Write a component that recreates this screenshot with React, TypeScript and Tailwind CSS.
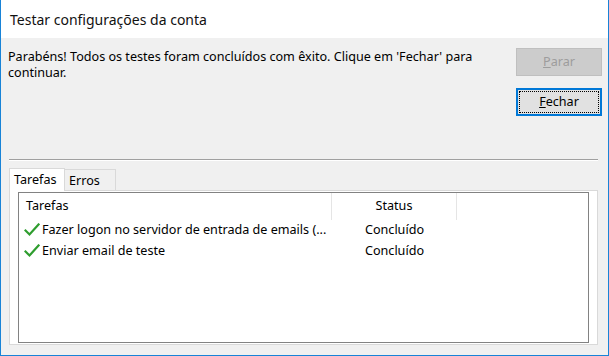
import React from "react";

function Check() {
  return (
    <svg width="16" height="14" viewBox="0 0 16 14" className="shrink-0">
      <path d="M1.5 7.5 L5.5 11.5 L14.5 1.5" fill="none" stroke="#2e9d2e" strokeWidth="2.2" strokeLinecap="square" />
    </svg>
  );
}

export default function App() {
  const font = { fontFamily: '"Noto Sans", "Open Sans", sans-serif' };
  return (
    <div
      className="w-[609px] h-[356px] flex flex-col border-l border-r border-b border-[#1883d7] bg-[#f0f0f0] text-[12.6px] text-black overflow-hidden"
      style={font}
    >
      <div className="h-[38px] shrink-0 bg-white flex items-center pl-[9px] text-[14px] text-[#111]">
        Testar configurações da conta
      </div>
      <div className="flex-1 flex flex-col">
        <div className="flex h-[121px] shrink-0">
          <div className="flex-1 pl-[7px] pt-[11px] pr-[30px] leading-[16px]">
            Parabéns! Todos os testes foram concluídos com êxito. Clique em 'Fechar' para continuar.
          </div>
          <div className="w-[86px] mr-[6px] pt-[10px] flex flex-col gap-[12px]">
            <div className="h-[28px] bg-[#cccccc] border border-[#bfbfbf] flex items-center justify-center text-[#9d9d9d]">
              <span><span className="underline">P</span>arar</span>
            </div>
            <div className="relative h-[28px] bg-[#e1e1e1] border-2 border-[#0078d7] flex items-center justify-center">
              <span className="absolute inset-[1px] border border-dotted border-black" />
              <span><span className="underline">F</span>echar</span>
            </div>
          </div>
        </div>
        <div className="mx-[8px] mr-[10px] border-t border-[#a0a0a0] border-b border-b-white" />
        <div className="mx-[8px] mr-[10px] mt-[6px] flex items-end h-[23px]">
          <div className="h-[23px] w-[56px] bg-white border border-b-0 border-[#d9d9d9] flex items-center pl-[4px] pt-[1px] relative z-10 -mb-px">
            Tarefas
          </div>
          <div className="h-[21px] w-[51px] bg-[#f0f0f0] border border-l-0 border-b-0 border-[#d9d9d9] flex items-center pl-[4px] pt-[2px]">
            Erros
          </div>
        </div>
        <div className="mx-[8px] mr-[10px] h-[155px] bg-white border border-[#d9d9d9] px-[8px] pt-[1px] pb-[1px] flex">
          <div className="flex-1 border border-[#828282] bg-white flex flex-col">
            <div className="flex h-[27px] items-center">
              <div className="w-[313px] h-full pl-[7px] flex items-center border-r border-[#e5e5e5]">Tarefas</div>
              <div className="w-[125px] h-full flex items-center justify-center border-r border-[#e5e5e5]">Status</div>
            </div>
            <div className="flex h-[21px] items-center">
              <div className="w-[313px] pl-[5px] flex items-center gap-[2px]">
                <Check />
                <span>Fazer logon no servidor de entrada de emails (...</span>
              </div>
              <div className="w-[125px] text-center">Concluído</div>
            </div>
            <div className="flex h-[21px] items-center">
              <div className="w-[313px] pl-[5px] flex items-center gap-[2px]">
                <Check />
                <span>Enviar email de teste</span>
              </div>
              <div className="w-[125px] text-center">Concluído</div>
            </div>
          </div>
        </div>
      </div>
    </div>
  );
}
